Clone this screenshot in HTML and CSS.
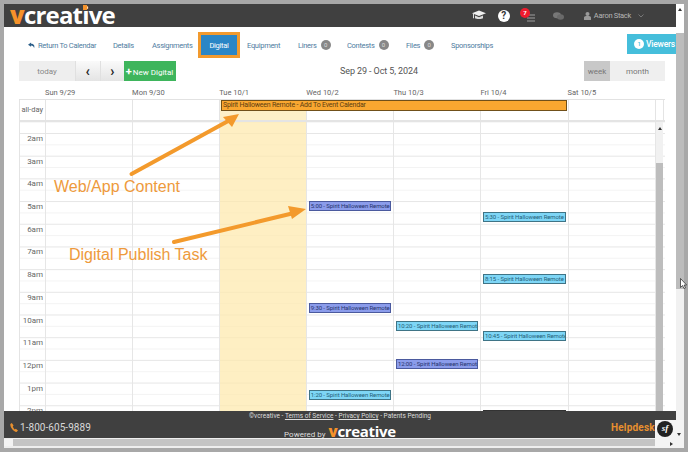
FILE: index.html
```html
<!DOCTYPE html>
<html lang="en">
<head>
<meta charset="utf-8">
<title>vCreative Calendar</title>
<link rel="stylesheet" href="styles.css">
</head>
<body>
<div class="screen">
  <div class="page">
    <header class="topbar">
      <div class="logo"><span class="logo-v">v</span>creative<i class="logo-dot"></i></div>
      <div class="top-tools">
        <svg class="ic-cap" viewBox="0 0 14 11" width="14" height="11"><path d="M0 3.2 7 .5l7 2.7-7 2.7z" fill="#eee"/><path d="M3 5.6v2.6c1 1 7 1 8 0V5.6L7 7.2zM1 3.6v4.6h1V3.4z" fill="#ddd"/></svg>
        <span class="help">?</span>
        <span class="alerts"><svg viewBox="0 0 8 8" width="8" height="8" class="ic-list"><path d="M0 0h8v2H0zM0 3h8v2H0zM0 6h8v2H0z" fill="#6f6f6f"/></svg><b class="alert-badge">7</b></span>
        <svg class="ic-chat" viewBox="0 0 11 8" width="11" height="8"><ellipse cx="4" cy="3.2" rx="4" ry="3" fill="#777"/><ellipse cx="7.5" cy="5" rx="3.5" ry="2.8" fill="#6a6a6a"/></svg>
        <span class="user"><svg viewBox="0 0 7 8" width="7" height="8"><circle cx="3.5" cy="2" r="2" fill="#999"/><path d="M0 8V5.5C0 4.5 1 4 3.5 4S7 4.5 7 5.5V8z" fill="#999"/></svg>Aaron Stack<svg class="chev" viewBox="0 0 6 4" width="6" height="4"><path d="M.5.5 3 3 5.500.5" fill="none" stroke="#777"/></svg></span>
      </div>
    </header>

    <nav class="nav">
      <a class="tab tab-return"><svg viewBox="0 0 8 7" width="7" height="7"><path d="M3.500 0 0 2.700 3.500 5V3.400C5.500 3.400 6.500 4.400 7 6.500 8 3.500 6.500 1.600 3.500 1.600z" fill="#2c5f8a"/></svg>Return To Calendar</a>
      <a class="tab tab-details">Details</a>
      <a class="tab tab-assign">Assignments</a>
      <a class="tab tab-active">Digital</a>
      <a class="tab tab-equip">Equipment</a>
      <a class="tab tab-liners">Liners<span class="count">0</span></a>
      <a class="tab tab-contests">Contests<span class="count">0</span></a>
      <a class="tab tab-files">Files<span class="count">0</span></a>
      <a class="tab tab-spons">Sponsorships</a>
      <a class="viewers"><span class="viewer-num">1</span>Viewers</a>
    </nav>

    <div class="toolbar">
      <div class="tool-left">
        <button class="btn btn-today">today</button>
        <button class="btn btn-arrow">&#8249;</button>
        <button class="btn btn-arrow">&#8250;</button>
        <button class="btn btn-new"><b>+</b>New Digital</button>
      </div>
      <h2 class="range">Sep 29 - Oct 5, 2024</h2>
      <div class="tool-right">
        <button class="btn btn-week">week</button>
        <button class="btn btn-month">month</button>
      </div>
    </div>

    <section class="cal">
      <div class="cal-head">
        <span></span><span>Sun 9/29</span><span>Mon 9/30</span><span>Tue 10/1</span><span>Wed 10/2</span><span>Thu 10/3</span><span>Fri 10/4</span><span>Sat 10/5</span><span></span>
      </div>
      <div class="cal-allday">
        <div class="axis-label">all-day</div>
        <div class="ad-cell"></div><div class="ad-cell"></div><div class="ad-cell ad-today"></div><div class="ad-cell"></div><div class="ad-cell"></div><div class="ad-cell"></div><div class="ad-cell"></div><div class="ad-cell ad-gutter"></div>
        <div class="allday-event">Spirit Halloween Remote - Add To Event Calendar</div>
      </div>
      <div class="cal-body">
        <div class="axis">
          <div class="hour">2am</div><div class="hour">3am</div><div class="hour">4am</div><div class="hour">5am</div><div class="hour">6am</div><div class="hour">7am</div><div class="hour">8am</div><div class="hour">9am</div><div class="hour">10am</div><div class="hour">11am</div><div class="hour">12pm</div><div class="hour">1pm</div><div class="hour">2pm</div>
        </div>
        <div class="day"></div>
        <div class="day"></div>
        <div class="day day-today"></div>
        <div class="day">
          <div class="ev ev-purple" style="top:79px">5:00 - Spirit Halloween Remote -</div>
          <div class="ev ev-purple" style="top:181px">9:30 - Spirit Halloween Remote -</div>
          <div class="ev ev-blue" style="top:268px">1:20 - Spirit Halloween Remote -</div>
        </div>
        <div class="day">
          <div class="ev ev-blue" style="top:199px">10:20 - Spirit Halloween Remote</div>
          <div class="ev ev-purple" style="top:237px">12:00 - Spirit Halloween Remote</div>
        </div>
        <div class="day">
          <div class="ev ev-blue" style="top:90px">5:30 - Spirit Halloween Remote -</div>
          <div class="ev ev-blue" style="top:152px">8:15 - Spirit Halloween Remote -</div>
          <div class="ev ev-blue" style="top:209px">10:45 - Spirit Halloween Remote</div>
          <div class="ev ev-dark" style="top:288px"></div>
        </div>
        <div class="day"></div>
        <div class="inner-scroll"><span class="up-arrow"></span><span class="inner-thumb"></span></div>
      </div>
    </section>

    <footer class="footer">
      <div class="phone"><svg viewBox="0 0 8 9" width="8" height="9"><path d="M1.800 0 .4 1C-.3 3.500 3.200 8.500 6.500 9L8 7.500 5.800 5.700 4.800 6.400C3.800 5.600 3 4.200 2.800 3.200L3.600 2.400z" fill="#e8902f"/></svg>1-800-605-9889</div>
      <div class="foot-mid">
        <div class="legal">©vcreative - <u>Terms of Service</u> - <u>Privacy Policy</u> - Patents Pending</div>
        <div class="powered">Powered by <span class="foot-logo"><span class="logo-v">v</span>creative</span></div>
      </div>
      <div class="helpdesk">Helpdesk Online</div>
    </footer>

    <div class="hscroll"><span class="h-arrow"></span><span class="h-thumb"></span></div>
  </div>

  <aside class="vscroll"><span class="v-top"></span><span class="v-thumb"></span></aside>
</div>

<svg class="arrows" viewBox="0 0 688 452" width="688" height="452">
  <path d="M131.500 174 230 120" stroke="#f39a2c" stroke-width="4" stroke-linecap="round" fill="none"/>
  <path d="M239 114 223 117 232 127z" fill="#f39a2c"/>
  <path d="M174 242 294 213" stroke="#f39a2c" stroke-width="4" stroke-linecap="round" fill="none"/>
  <path d="M306 209 288 206 292 219z" fill="#f39a2c"/>
</svg>
<div class="note note-web">Web/App Content</div>
<div class="note note-task">Digital Publish Task</div>

<svg class="cursor" viewBox="0 0 7 11" width="7" height="11"><path d="M.5.500v9l2-2 1.500 3 1.500-.7L4 7h2.600z" fill="#fff" stroke="#222" stroke-width=".7"/></svg>

<div class="sf-bar">
  <span class="sf-logo">sf</span>
  <span class="sf-down"></span>
  <span class="sf-right"></span>
</div>
</body>
</html>
```

FILE: styles.css
```css
* { box-sizing: border-box; }
html, body { margin: 0; height: 100%; }
body {
  width: 688px; height: 452px; overflow: hidden; position: relative;
  background: #a8a8a8;
  font-family: "Roboto", "Liberation Sans", sans-serif;
  color: #555;
}
.screen { display: flex; padding: 4px; height: 452px; }
.page { width: 672px; height: 444px; background: #fff; display: flex; flex-direction: column; overflow: hidden; }

/* top bar */
.topbar { height: 23px; flex: none; background: #404040; display: flex; align-items: center; padding: 0 0 0 6px; }
.logo { position: relative; font: 700 24px/23px "Open Sans", sans-serif; color: #fff; letter-spacing: -.8px; height: 23px; margin-top: -2px; }
.logo-v { color: #f5922a; font-weight: 800; }
.logo-dot { position: absolute; left: 73px; top: 2px; width: 4px; height: 5px; background: #f5922a; }
.top-tools { margin-left: auto; display: flex; align-items: center; padding-right: 32px; height: 100%; }
.ic-cap { margin-right: 12px; }
.help { width: 12px; height: 12px; border-radius: 50%; background: #fff; color: #333; font: 700 10px/12px "Roboto", sans-serif; text-align: center; margin-right: 10px; }
.alerts { position: relative; width: 15px; height: 16px; margin-right: 18px; }
.ic-list { position: absolute; left: 7px; top: 6px; }
.alert-badge { position: absolute; left: 0; top: 0; width: 10px; height: 10px; border-radius: 50%; background: #ee1c2e; color: #fff; font: 700 6px/10px "Roboto", sans-serif; text-align: center; }
.ic-chat { margin-right: 20px; }
.user { display: flex; align-items: center; gap: 3px; font-size: 7.500px; letter-spacing: -.3px; color: #b5b5b5; }
.chev { margin-left: 4px; }

/* tabs */
.nav { height: 34px; flex: none; display: flex; align-items: center; padding: 2px 0 0 24px; font-size: 7.500px; letter-spacing: -.3px; }
.tab { color: #4f7d9f; display: flex; align-items: center; white-space: nowrap; }
.tab-return { gap: 3px; width: 85px; }
.tab-details { width: 39px; }
.tab-assign { width: 46px; }
.tab-active { width: 42px; height: 26px; justify-content: center; background: #2b86c6; border: 3px solid #f29a2e; color: #fff; margin-right: 7px; }
.tab-equip { width: 51px; }
.tab-liners { width: 49px; }
.tab-contests { width: 59px; }
.tab-files { width: 45px; }
.tab-spons { width: 60px; }
.count { display: inline-block; width: 10px; height: 10px; border-radius: 50%; background: #888; color: #ddd; font-size: 6px; line-height: 10px; text-align: center; margin-left: 4px; letter-spacing: 0; }
.viewers { margin-left: auto; width: 49px; height: 20px; margin-top: -3px; background: #45bedb; color: #fff; font-size: 8.500px; letter-spacing: -.2px; font-weight: 500; display: flex; align-items: center; padding-left: 7px; gap: 2px; white-space: nowrap; overflow: hidden; flex: none; }
.viewer-num { width: 10px; height: 10px; border-radius: 50%; background: #fff; color: #45bedb; font-size: 6px; line-height: 10px; text-align: center; flex: none; }

/* toolbar */
.toolbar { height: 20px; flex: none; display: flex; align-items: center; justify-content: space-between; margin: 0 11px 0 15px; position: relative; }
.tool-left, .tool-right { display: flex; height: 100%; }
.btn { border: 0; padding: 0; height: 20px; font-family: inherit; font-size: 8px; color: #888; background: #eee; }
.btn-today { width: 56px; }
.btn-arrow { width: 24.500px; background: linear-gradient(#fafafa, #e4e4e4); color: #222; font-size: 14px; font-weight: 700; line-height: 16px; border-left: 1px solid #e0e0e0; }
.btn-new { width: 52px; background: #3eb55c; color: #fff; margin-left: -.5px; white-space: nowrap; }
.btn-new b { font-size: 11px; margin-right: 1px; }
.btn-week { width: 26px; background: #c8c8c8; color: #777; }
.btn-month { width: 55px; background: #efefef; color: #777; }
.range { margin: 0; font-size: 9px; letter-spacing: -.1px; font-weight: 400; color: #555; position: absolute; left: 321px; top: 5px; white-space: nowrap; }

/* calendar */
.cal { flex: 1; min-height: 0; margin: 0 11px 0 15px; display: flex; flex-direction: column; overflow: hidden; }
.cal-head, .cal-allday, .cal-body { display: grid; grid-template-columns: 26px repeat(7, 87.1px) 9.300px; }
.cal-head { height: 18px; flex: none; font-size: 7.500px; color: #666; align-items: end; line-height: 13px; padding-bottom: 0; }
.cal-allday { height: 23px; flex: none; position: relative; border-top: 1px solid #e2e2e2; border-bottom: 2px solid #e4e4e4; }
.axis-label { font-size: 7.500px; color: #666; border-left: 1px solid #e4e4e4; text-align: right; padding: 5px 2px 0 0; }
.ad-cell { border-left: 1px solid #e4e4e4; }
.ad-gutter { border-right: 1px solid #e4e4e4; }
.ad-today { background: #fdf0c8; }
.allday-event {
  position: absolute; left: 202px; top: 0; width: 346px; height: 11px;
  background: #f9a730; border: 1px solid #70501a; color: #5c3d10; font-size: 7px; letter-spacing: -.2px; line-height: 9px; padding-left: 1px; white-space: nowrap;
}
.cal-body {
  flex: 1; min-height: 0; overflow: hidden; position: relative;
  background-image: linear-gradient(#e6e6e6 1px, transparent 1px), linear-gradient(#f3f3f3 1px, transparent 1px);
  background-size: 100% 22.700px, 100% 22.700px;
  background-position: 0 11px, 0 -.350px;
}
.axis { padding-top: 11px; border-left: 1px solid #e4e4e4; min-width: 0; }
.hour { height: 22.700px; font-size: 8px; line-height: 12px; color: #666; text-align: right; padding: 0 2px 0 0; }
.day { position: relative; border-left: 1px solid #e6e6e6; }
.day-today { background: rgba(253, 233, 172, .72); }
.ev { position: absolute; left: 1.500px; right: 2px; height: 10px; border: 1px solid; font-size: 6px; letter-spacing: -.1px; line-height: 8px; padding-left: 1px; white-space: nowrap; overflow: hidden; }
.ev-purple { background: #8b9ceb; border-color: #4b5a9e; color: #26336e; }
.ev-blue { background: #7ed6f6; border-color: #3f7486; color: #245f78; }
.ev-dark { background: #333; border-color: #333; }
.inner-scroll { background: #f1f1f1; display: flex; flex-direction: column; margin: 0 .5px; padding-top: 0; position: relative; border-left: 1px solid #e6e6e6; }
.up-arrow { display: block; height: 41px; flex: none; position: relative; }
.up-arrow::before { content: ""; position: absolute; left: 2px; top: 5px; border: 2px solid transparent; border-bottom: 3px solid #333; border-top: 0; }
.inner-thumb { flex: 1; background: #bdbdbd; }

/* footer */
.footer { height: 27px; flex: none; background: #404040; display: grid; grid-template-columns: 1fr auto 1fr; color: #ddd; position: relative; overflow: hidden; }
.phone { display: flex; align-items: center; gap: 2px; padding-left: 6px; font-size: 10px; font-weight: 400; letter-spacing: .05px; color: #d8d8d8; white-space: nowrap; }
.foot-mid { text-align: center; }
.legal { font-size: 6.500px; line-height: 10px; color: #ddd; white-space: nowrap; }
.powered { font-size: 8px; line-height: 16px; padding-top: 2px; color: #ddd; white-space: nowrap; }
.foot-logo { font: 700 15px/16px "Open Sans", sans-serif; color: #fff; letter-spacing: -.3px; margin-left: 1px; }
.helpdesk { justify-self: end; width: 65px; font-size: 10px; font-weight: 700; color: #e8902f; align-self: center; white-space: nowrap; letter-spacing: .2px; overflow: hidden; }

/* page scrollbars */
.hscroll { height: 10px; flex: none; background: #eee; display: flex; padding: 1px 0 2px; align-items: stretch; }
.h-arrow { width: 9px; background: #f3f3f3; flex: none; }
.h-thumb { flex: 1; background: #c4c4c4; }
.vscroll { width: 8px; height: 444px; display: flex; flex-direction: column; background: #f1f1f1; }
.v-top { height: 29px; background: #fff; position: relative; flex: none; }
.v-top::before { content: ""; position: absolute; left: 2px; top: 4px; border: 2px solid transparent; border-bottom: 3px solid #333; border-top: 0; }
.v-thumb { height: 256px; background: #bcbcbc; flex: none; }

/* annotations laid over the screenshot */
.arrows { position: absolute; left: 0; top: 0; pointer-events: none; }
.note { position: absolute; font: 16px/18px "Liberation Sans", sans-serif; color: #ee9a3c; white-space: nowrap; }
.note-web { left: 54px; top: 178px; }
.note-task { left: 69px; top: 246px; }
.cursor { position: absolute; left: 680px; top: 278px; }

/* debug toolbar badge */
.sf-bar { position: absolute; left: 655px; top: 420px; width: 29px; height: 28px; background: #f4f4f4; }
.sf-logo { position: absolute; left: 2px; top: 1px; width: 16px; height: 16px; border-radius: 50%; background: #222; color: #fff; font: italic 700 9px/15px "Liberation Serif", serif; text-align: center; }
.sf-down { position: absolute; left: 22px; top: 13px; border: 2px solid transparent; border-top: 3px solid #333; border-bottom: 0; }
.sf-right { position: absolute; left: 15px; top: 22px; border: 2px solid transparent; border-left: 3px solid #333; border-right: 0; }
```
